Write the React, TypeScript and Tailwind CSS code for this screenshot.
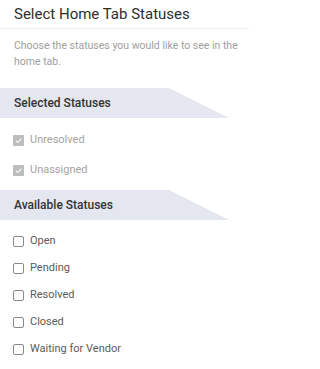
import React from 'react';

const selected = ['Unresolved', 'Unassigned'];
const available = ['Open', 'Pending', 'Resolved', 'Closed', 'Waiting for Vendor'];

function SectionBanner({ title }: { title: string }) {
  return (
    <div className="h-[30px] w-[229px] bg-[#e4e6f0] [clip-path:polygon(0_0,169px_0,229px_100%,0_100%)] flex items-center pl-[14px]">
      <span className="text-[12px] font-medium text-[#333]">{title}</span>
    </div>
  );
}

function CheckedBox() {
  return (
    <span className="w-[11px] h-[11px] rounded-[1px] bg-[#bdbdbd] flex items-center justify-center shrink-0">
      <svg width="9" height="9" viewBox="0 0 10 10" fill="none">
        <path d="M2 5.2 L4.2 7.3 L8.2 2.8" stroke="white" strokeWidth="1.2" />
      </svg>
    </span>
  );
}

function EmptyBox() {
  return <span className="w-[11px] h-[11px] rounded-[2px] border border-[#8a8a8a] bg-white shrink-0" />;
}

export default function App() {
  return (
    <div className="w-[249px] h-[369px] bg-white font-['Roboto',sans-serif] overflow-hidden">
      {/* header */}
      <div className="h-[29px] border-b border-[#eeeeee] flex items-center px-[14px]">
        <h1 className="text-[15px] text-[#2e2e2e] leading-none">Select Home Tab Statuses</h1>
      </div>

      <p className="pl-[14px] pr-[4px] pt-[9px] mb-[18px] text-[10.5px] leading-[16px] text-[#9e9e9e]">
        Choose the statuses you would like to see in the home tab.
      </p>

      <SectionBanner title="Selected Statuses" />
      <div className="pt-[7px] pb-[5px]">
        {selected.map((s) => (
          <label key={s} className="h-[30px] flex items-center gap-[6px] pl-[13px]">
            <CheckedBox />
            <span className="text-[11px] text-[#a3a3a3]">{s}</span>
          </label>
        ))}
      </div>

      <SectionBanner title="Available Statuses" />
      <div className="pt-[8px]">
        {available.map((s) => (
          <label key={s} className="h-[27px] flex items-center gap-[6px] pl-[13px]">
            <EmptyBox />
            <span className="text-[11px] text-[#5a5a5a]">{s}</span>
          </label>
        ))}
      </div>
    </div>
  );
}
